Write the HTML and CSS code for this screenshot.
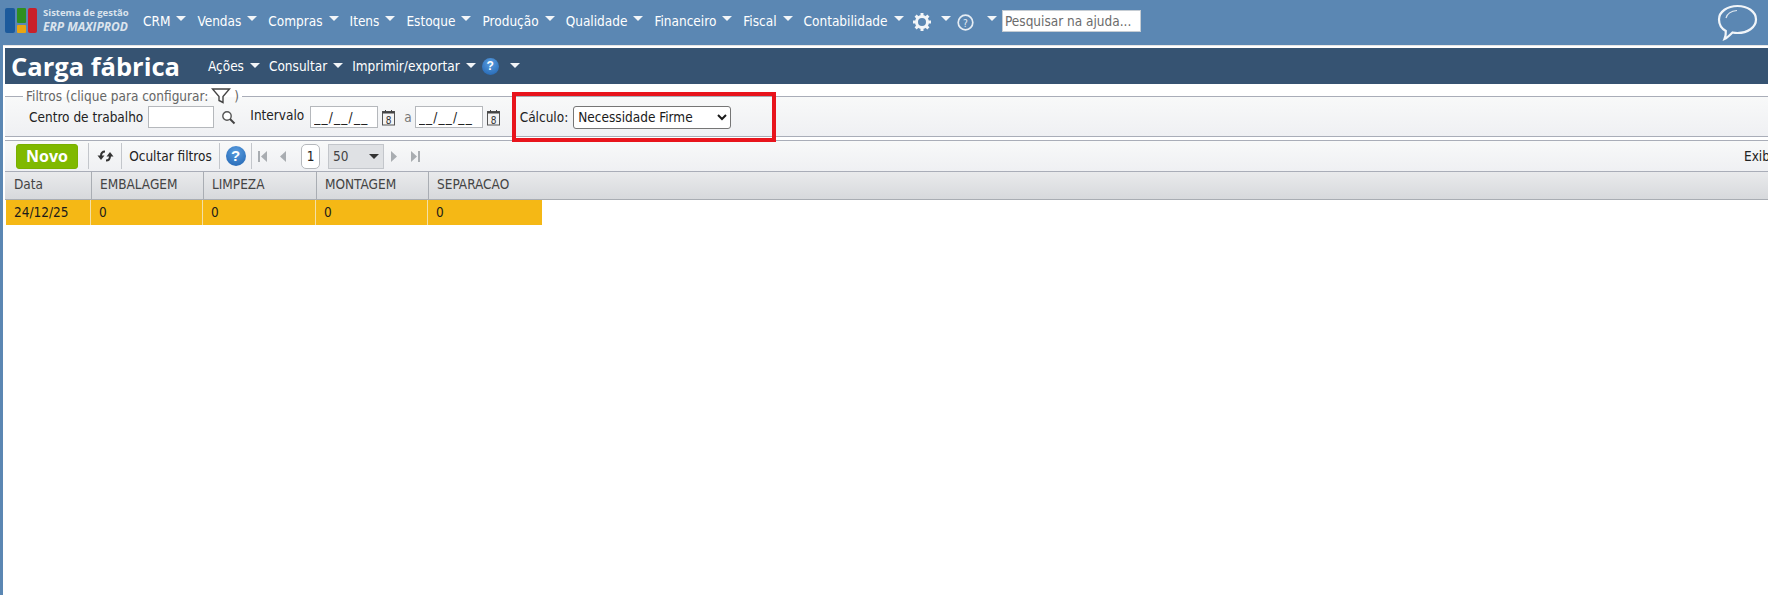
FILE: index.html
```html
<!DOCTYPE html>
<html lang="pt-BR">
<head>
    <meta charset="UTF-8">
    <title>Carga fábrica</title>
    <link rel="stylesheet" href="styles.css">
</head>
<body>

    <div id="topbar">
        <div class="logo">
            <svg width="33" height="25" viewBox="0 0 33 25">
                <rect x="0" y="0" width="10" height="25" rx="2" fill="#1c5a9c"/>
                <rect x="12" y="0" width="9" height="15" rx="1" fill="#2f8f1f"/>
                <rect x="12" y="17" width="9" height="8" rx="1" fill="#eaa512"/>
                <rect x="23" y="0" width="9" height="25" rx="2" fill="#c8202a"/>
            </svg>
            <div class="logo-text">
                <span class="logo-small">Sistema de gestão</span>
                <span class="logo-big">ERP MAXIPROD</span>
            </div>
        </div>
        <nav class="mainmenu">
            <a>CRM<i class="caret"></i></a>
            <a>Vendas<i class="caret"></i></a>
            <a>Compras<i class="caret"></i></a>
            <a>Itens<i class="caret"></i></a>
            <a>Estoque<i class="caret"></i></a>
            <a>Produção<i class="caret"></i></a>
            <a>Qualidade<i class="caret"></i></a>
            <a>Financeiro<i class="caret"></i></a>
            <a>Fiscal<i class="caret"></i></a>
            <a>Contabilidade<i class="caret"></i></a>
        </nav>
        <svg class="gear" width="20" height="20" viewBox="0 0 20 20">
            <circle cx="10" cy="10" r="5.5" fill="none" stroke="#f2f5f8" stroke-width="3"/>
            <path d="M10 1v4M10 15v4M1 10h4M15 10h4M3.6 3.6l2.8 2.8M13.6 13.6l2.8 2.8M3.6 16.4l2.8-2.8M13.6 6.4l2.8-2.8" stroke="#f2f5f8" stroke-width="3"/>
        </svg>
        <i class="caret caret-gear"></i>
        <svg class="help-outline" width="17" height="17" viewBox="0 0 17 17">
            <circle cx="8.5" cy="8.5" r="7.3" fill="none" stroke="#e6edf4" stroke-width="1.7"/>
            <text x="8.5" y="12.5" text-anchor="middle" class="help-mark">?</text>
        </svg>
        <i class="caret caret-help"></i>
        <input class="search" type="text" placeholder="Pesquisar na ajuda...">
        <svg class="bubble" width="41" height="37" viewBox="0 0 41 37">
            <path d="M20.5 2C30.5 2 39 7.500 39 15.500S30.500 29 20.500 29c-2 0-3.500-.2-5-.5C13 31 10 34 7.500 35c1-2.500 1.500-5 1.300-8C4.500 24.500 2 20.500 2 15.500 2 7.500 10.500 2 20.500 2z" fill="none" stroke="#f1f5f9" stroke-width="2.200"/>
            <path d="M9 14c1-4 5-7 11-7.500" fill="none" stroke="#dfe8f0" stroke-width="1.200"/>
        </svg>
    </div>

    <div id="page">
        <div id="titlebar">
            <h1>Carga fábrica</h1>
            <nav class="submenu">
                <a>Ações<i class="caret"></i></a>
                <a>Consultar<i class="caret"></i></a>
                <a>Imprimir/exportar<i class="caret"></i></a>
            </nav>
            <span class="help-ball help-small">?</span>
            <i class="caret caret-title"></i>
        </div>

        <fieldset id="filters">
            <legend>
                Filtros (clique para configurar:
                <svg width="20" height="18" viewBox="0 0 20 18">
                    <path d="M1.500 2h17l-6.500 7.500v6l-4-2v-4z" fill="none" stroke="#444" stroke-width="1.400"/>
                </svg>
                )
            </legend>
            <label class="lbl lbl-centro">Centro de trabalho</label>
            <input class="field field-centro" type="text">
            <svg class="search-icon" width="15" height="15" viewBox="0 0 15 15">
                <circle cx="6" cy="6" r="4.200" fill="#fff" stroke="#555" stroke-width="1.400"/>
                <path d="M9 9l4.500 4.500" stroke="#444" stroke-width="2"/>
            </svg>
            <label class="lbl lbl-intervalo">Intervalo</label>
            <input class="field field-date" type="text" value="__/__/__">
            <svg class="cal" width="15" height="17" viewBox="0 0 15 17">
                <rect x="1.500" y="2.500" width="12" height="13.500" fill="#f4f4f4" stroke="#555"/>
                <path d="M1.500 3.500h12" stroke="#444" stroke-width="2"/>
                <path d="M4.500 1v3M10.500 1v3" stroke="#444"/>
                <text x="7.500" y="14.500" text-anchor="middle" class="cal-day">8</text>
            </svg>
            <span class="sep-a">a</span>
            <input class="field field-date" type="text" value="__/__/__">
            <svg class="cal" width="15" height="17" viewBox="0 0 15 17">
                <rect x="1.500" y="2.500" width="12" height="13.500" fill="#f4f4f4" stroke="#555"/>
                <path d="M1.500 3.500h12" stroke="#444" stroke-width="2"/>
                <path d="M4.500 1v3M10.500 1v3" stroke="#444"/>
                <text x="7.500" y="14.500" text-anchor="middle" class="cal-day">8</text>
            </svg>
            <label class="lbl lbl-calculo">Cálculo:</label>
            <select class="calc">
                <option>Necessidade Firme</option>
            </select>
        </fieldset>

        <div id="toolbar">
            <button type="button" class="novo">Novo</button>
            <span class="tool tool-refresh">
                <svg width="17" height="14" viewBox="0 0 17 14">
                    <path d="M8 2.500C5.500 2.500 4 4 4 7" fill="none" stroke="#333" stroke-width="2"/>
                    <path d="M0.500 6.500h7L4 11z" fill="#333"/>
                    <path d="M9 11.500c2.500 0 4-1.500 4-4.500" fill="none" stroke="#333" stroke-width="2"/>
                    <path d="M9.500 7.500h7L13 3z" fill="#333"/>
                </svg>
            </span>
            <span class="tool tool-hide">Ocultar filtros</span>
            <span class="tool tool-help"><span class="help-ball">?</span></span>
            <svg class="pager-icon pager-first" width="9" height="11" viewBox="0 0 9 11"><path d="M0 0h2v11H0zM9 0v11L3 5.500z" fill="#a9adb1"/></svg>
            <svg class="pager-icon pager-prev" width="6" height="11" viewBox="0 0 6 11"><path d="M6 0v11L0 5.500z" fill="#a9adb1"/></svg>
            <span class="page-box">1</span>
            <span class="page-size">50<i class="size-caret"></i></span>
            <svg class="pager-icon pager-next" width="6" height="11" viewBox="0 0 6 11"><path d="M0 0v11l6-5.500z" fill="#a9adb1"/></svg>
            <svg class="pager-icon pager-last" width="9" height="11" viewBox="0 0 9 11"><path d="M0 0v11l6-5.500zM7 0h2v11H7z" fill="#a9adb1"/></svg>
            <span class="exib">Exib</span>
        </div>

        <div class="grid">
            <div class="grid-row grid-head">
                <div class="cell col-data">Data</div>
                <div class="cell col-b">EMBALAGEM</div>
                <div class="cell col-c">LIMPEZA</div>
                <div class="cell col-d">MONTAGEM</div>
                <div class="cell col-e">SEPARACAO</div>
            </div>
            <div class="grid-row grid-line">
                <div class="cell col-data">24/12/25</div>
                <div class="cell col-b">0</div>
                <div class="cell col-c">0</div>
                <div class="cell col-d">0</div>
                <div class="cell col-e">0</div>
            </div>
        </div>
    </div>

    <div class="callout"></div>

</body>
</html>
```

FILE: styles.css
```css
* {
    box-sizing: border-box;
}

html, body {
    height: 100%;
}

body {
    margin: 0;
    overflow: hidden;
    background-color: #5b87b3;
    font-family: "DejaVu Sans Condensed", "DejaVu Sans", sans-serif;
    font-size: 13.5px;
    color: #222;
}

/* top blue bar */
#topbar {
    display: flex;
    align-items: center;
    height: 45px;
    padding-left: 5px;
    background-color: #5b87b3;
    color: #fff;
}

.logo {
    display: flex;
    align-items: center;
    width: 138px;
    flex: none;
    margin-bottom: 5px;
}

.logo-text {
    display: flex;
    flex-direction: column;
    margin-left: 5px;
    color: #dbe4ed;
    font-weight: bold;
    font-family: "Open Sans", sans-serif;
}

.logo-small {
    font-size: 9.5px;
    line-height: 13px;
    white-space: nowrap;
}

.logo-big {
    font-size: 12px;
    line-height: 15px;
    font-style: italic;
    white-space: nowrap;
}

.mainmenu {
    display: flex;
    flex: none;
    width: 769px;
    margin-bottom: 4px;
}

.mainmenu a {
    display: flex;
    align-items: center;
    margin-right: 11px;
    white-space: nowrap;
    color: #fff;
}

.caret {
    display: inline-block;
    flex: none;
    width: 0;
    height: 0;
    margin-left: 6px;
    margin-bottom: 4px;
    border-left: 5px solid transparent;
    border-right: 5px solid transparent;
    border-top: 5px solid #f2f5f8;
}

.gear {
    flex: none;
    margin-bottom: 1px;
}

.caret-gear {
    margin-left: 9px;
    margin-bottom: 9px;
}

.help-outline {
    flex: none;
    margin-left: 6px;
}

.help-mark {
    font-size: 10px;
    fill: #e6edf4;
}

.caret-help {
    margin-left: 13px;
    margin-bottom: 9px;
}

.search {
    width: 139px;
    height: 22px;
    margin-left: 5px;
    margin-bottom: 3px;
    padding: 0 2px;
    border: 1px solid #c5ccd3;
    background-color: #fff;
    font-family: inherit;
    font-size: 13.5px;
}

.search::placeholder {
    color: #6b6b6b;
    opacity: 1;
}

.bubble {
    flex: none;
    margin-left: auto;
    margin-right: 10px;
}

/* page panel */
#page {
    height: calc(100% - 45px);
    margin-left: 3px;
    padding-top: 2px;
    padding-left: 2px;
    border-top: 1px solid #e6e6e6;
    background-color: #fff;
}

#titlebar {
    display: flex;
    align-items: center;
    height: 36px;
    padding-left: 6px;
    background-color: #365372;
    color: #fff;
}

h1 {
    margin: 0 28px 0 0;
    font-family: "Open Sans", sans-serif;
    font-size: 25.5px;
    font-weight: bold;
    white-space: nowrap;
}

.submenu {
    display: flex;
}

.submenu a {
    display: flex;
    align-items: center;
    margin-right: 9px;
    white-space: nowrap;
}

.submenu .caret {
    margin-bottom: 2px;
}

.submenu a:last-child {
    margin-right: 6px;
}

.help-ball {
    display: inline-block;
    width: 20px;
    height: 20px;
    border-radius: 50%;
    background: radial-gradient(circle at 50% 30%, #5a9ee0, #1f62b0);
    color: #fff;
    font-family: "Liberation Sans", sans-serif;
    font-size: 15px;
    font-weight: bold;
    line-height: 20px;
    text-align: center;
}

.help-small {
    width: 17px;
    height: 17px;
    font-size: 12px;
    line-height: 17px;
}

.caret-title {
    margin-left: 11px;
    margin-bottom: 2px;
}

/* filters */
#filters {
    display: flex;
    align-items: center;
    height: 49px;
    margin: 4px 0 0;
    padding: 0 0 6px 24px;
    border: 0;
    border-top: 1px solid #a9adb8;
    border-bottom: 1px solid #a9adb8;
    background: linear-gradient(#f8f9f9, #eff0f3);
}

legend {
    display: flex;
    align-items: center;
    gap: 3px;
    height: 16px;
    margin-left: -6px;
    padding: 0 3px;
    color: #666;
    font-size: 13.5px;
}

.lbl {
    white-space: nowrap;
}

.field {
    height: 22px;
    border: 1px solid #b5b8bc;
    background-color: #fff;
    font-family: inherit;
    font-size: 13.5px;
    color: #222;
    padding: 0 3px;
}

.field-centro {
    width: 66px;
    margin-left: 5px;
}

.search-icon {
    margin-left: 7px;
}

.lbl-intervalo {
    margin-left: 14px;
    margin-bottom: 5px;
}

.field-date {
    width: 68px;
    margin-left: 6px;
    letter-spacing: 1.2px;
}

.sep-a + .field-date {
    margin-left: 3px;
}

.cal {
    margin-left: 3px;
}

.cal-day {
    font-size: 10px;
    fill: #333;
}

.sep-a {
    margin-left: 8px;
    color: #777;
}

.lbl-calculo {
    margin-left: 19px;
}

.calc {
    width: 158px;
    height: 23px;
    margin-left: 5px;
    padding-left: 0;
    border: 1px solid #767676;
    border-radius: 3px;
    background-color: #fff;
    font-family: inherit;
    font-size: 13.5px;
    color: #1a1a1a;
}

/* toolbar */
#toolbar {
    display: flex;
    align-items: center;
    height: 32px;
    margin-top: 3px;
    padding-left: 11px;
    border-top: 1px solid #a9adb8;
    border-bottom: 1px solid #a9adb8;
    background: linear-gradient(#f8f9f9, #eff0f3);
}

.novo {
    width: 62px;
    height: 25px;
    padding: 0;
    border: 1px solid #7ab000;
    border-radius: 3px;
    background-color: #80b900;
    color: #fff;
    font-family: "Open Sans", sans-serif;
    font-size: 16px;
    font-weight: bold;
}

.tool {
    display: flex;
    align-items: center;
    justify-content: center;
    height: 26px;
    border-left: 1px solid #c3c6cb;
}

.tool-refresh {
    width: 33px;
    margin-left: 10px;
}

.tool-hide {
    width: 98px;
    white-space: nowrap;
}

.tool-help {
    width: 33px;
    border-right: 1px solid #c3c6cb;
}

.pager-icon {
    flex: none;
}

.pager-first {
    margin-left: 6px;
}

.pager-prev {
    margin-left: 13px;
}

.page-box {
    width: 19px;
    height: 25px;
    margin-left: 15px;
    border: 1px solid #b5b8bc;
    border-radius: 5px;
    background-color: #fff;
    line-height: 23px;
    text-align: center;
}

.page-size {
    display: flex;
    align-items: center;
    justify-content: space-between;
    width: 56px;
    height: 25px;
    margin-left: 8px;
    padding: 0 4px;
    border: 1px solid #c3c6cb;
    background-color: #dfe1e4;
    color: #444;
}

.size-caret {
    width: 0;
    height: 0;
    border-left: 5px solid transparent;
    border-right: 5px solid transparent;
    border-top: 5px solid #333;
}

.pager-next {
    margin-left: 7px;
}

.pager-last {
    margin-left: 14px;
}

.exib {
    margin-left: auto;
    width: 24px;
    white-space: nowrap;
}

/* grid */
.grid-row {
    display: flex;
}

.grid-head {
    height: 28px;
    border-bottom: 1px solid #a9adb3;
    background: linear-gradient(#e9eaec, #d7d9dc);
    color: #444;
}

.grid-head .cell {
    border-right: 1px solid #a9adb3;
    line-height: 24px;
}

.grid-head .col-e {
    border-right: 0;
}

.grid-line {
    width: 536px;
    height: 25px;
    margin-left: 1px;
    background-color: #f5b815;
    color: #1a1a1a;
}

.grid-line .cell {
    border-right: 1px solid #f3e0a8;
    line-height: 24px;
}

.grid-line .col-e {
    border-right: 0;
}

.cell {
    padding-left: 8px;
    white-space: nowrap;
}

.col-data {
    width: 85px;
}

.grid-head .col-data {
    width: 87px;
    padding-left: 9px;
}

.col-b {
    width: 112px;
}

.col-c {
    width: 113px;
}

.col-d {
    width: 112px;
}

.col-e {
    width: 112px;
}

/* red annotation over the screenshot */
.callout {
    position: absolute;
    left: 512px;
    top: 92px;
    width: 264px;
    height: 50px;
    border: 4px solid #e8141c;
}
```
